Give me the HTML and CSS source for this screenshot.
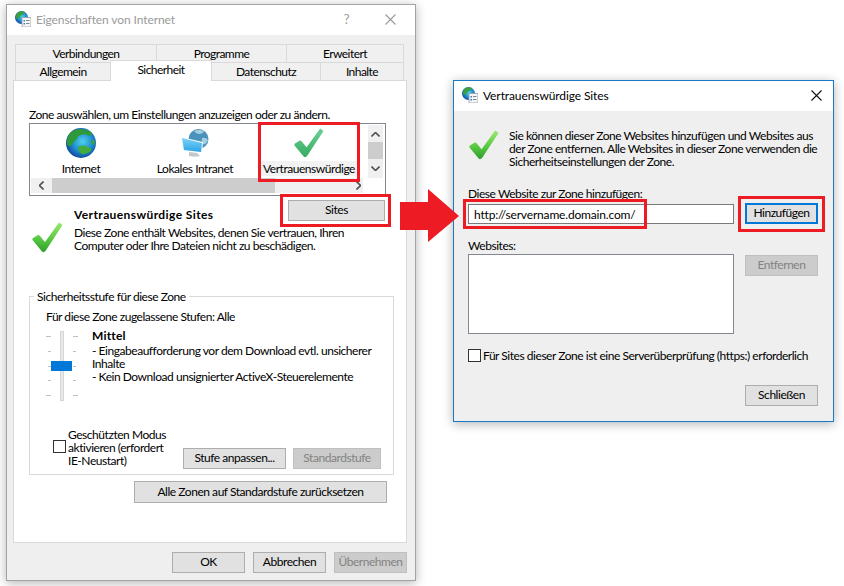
FILE: index.html
```html
<!DOCTYPE html>
<html lang="de">

<head>
    <meta charset="UTF-8">
    <meta name="viewport" content="width=device-width, initial-scale=1.0">
    <title>Vertrauenswürdige Sites</title>
    <link rel="stylesheet" href="styles.css">
</head>

<body>
    <svg class="icon-defs" aria-hidden="true">
        <defs>
            <linearGradient id="check-lime" x1="0" y1="0" x2="0" y2="1">
                <stop offset="0" stop-color="#9be86f" />
                <stop offset="0.55" stop-color="#58c943" />
                <stop offset="1" stop-color="#2f9e2c" />
            </linearGradient>
            <linearGradient id="check-teal" x1="0" y1="0" x2="0" y2="1">
                <stop offset="0" stop-color="#6fcf97" />
                <stop offset="1" stop-color="#35ac62" />
            </linearGradient>
            <radialGradient id="globe-sea" cx="0.55" cy="0.45" r="0.6">
                <stop offset="0" stop-color="#4fd0ea" />
                <stop offset="0.55" stop-color="#1f8fd0" />
                <stop offset="1" stop-color="#0f3f97" />
            </radialGradient>
            <linearGradient id="screen-blue" x1="0" y1="0" x2="0" y2="1">
                <stop offset="0" stop-color="#7fd3f7" />
                <stop offset="1" stop-color="#2aa3e6" />
            </linearGradient>
            <symbol id="check" viewBox="0 0 31 31">
                <path d="M27 0.500 L30.500 3 L13.500 29 Q11.500 31 10 29.500 L0.500 18 Q0 17 1 16 L6 13 Q7 12.800 8 14 L13 20 Z" />
            </symbol>
            <symbol id="globe" viewBox="0 0 30 30">
                <circle cx="15" cy="15" r="15" fill="url(#globe-sea)" />
                <path d="M5 4 Q14 -2 25 4 Q27 7 24 8 Q19 5 15 7 Q11 8 11 11 Q8 13 6 17 Q3 19 1 17 Q0 9 5 4 Z" fill="#2f9a3a" />
                <path d="M12 19 Q17 16 22 19 Q26 20 25 23 Q20 27 16 26 Q12 24 12 19 Z" fill="#43ab3c" />
                <path d="M25 12 Q28 11 29 14 Q29 17 27 17 Q25 15 25 12 Z" fill="#3b9f49" />
            </symbol>
            <symbol id="intranet" viewBox="0 0 28 28">
                <circle cx="17.500" cy="10" r="10" fill="#4b92bb" />
                <path d="M13 2 Q18 0 23 2 Q22 5 18 5 Q15 5 13 2 Z M21 9 Q25 8 27 11 Q25 16 22 15 Q20 12 21 9 Z" fill="#a4cfe0" />
                <path d="M0 8 L22 13 L21 24 L2 22 Z" fill="#f4fbff" />
                <path d="M1 9 L21 14 L20 23 L3 21 Z" fill="url(#screen-blue)" />
                <path d="M8 23 L16 24 L19 27 Q14 28.500 8 27 Z" fill="#c3c8cc" />
            </symbol>
            <symbol id="app-icon" viewBox="0 0 16 16">
                <circle cx="6.500" cy="6.500" r="6.500" fill="url(#globe-sea)" />
                <path d="M2 2 Q6 -1 10 1 Q9 4 6 4 Q5 7 2 8 Q0 6 2 2 Z" fill="#3d9f3d" />
                <path d="M7 6.500 H16 V16 H7 Z" fill="#f6f6f6" stroke="#9aa0a6" stroke-width="0.8" />
                <path d="M8.500 9 H10 V10.500 H8.500 Z M8.500 12 H10 V13.500 H8.500 Z" fill="#2c83c9" />
                <path d="M11 9.500 H14.500 M11 12.500 H14.500" stroke="#7d8790" stroke-width="1" />
            </symbol>
        </defs>
    </svg>

    <div class="window props">
        <div class="titlebar inactive">
            <svg class="app-icon"><use href="#app-icon" /></svg>
            <span class="title-text">Eigenschaften von Internet</span>
            <span class="help">?</span>
            <svg class="close" viewBox="0 0 11 11"><path d="M0.500 0.500 L10.500 10.500 M10.500 0.500 L0.500 10.500" /></svg>
        </div>
        <div class="props-body">
            <div class="tabs">
                <div class="tab-row upper">
                    <div class="tab t-verbindungen">Verbindungen</div>
                    <div class="tab t-programme">Programme</div>
                    <div class="tab t-erweitert">Erweitert</div>
                </div>
                <div class="tab-row">
                    <div class="tab t-allgemein">Allgemein</div>
                    <div class="tab t-sicherheit selected">Sicherheit</div>
                    <div class="tab t-datenschutz">Datenschutz</div>
                    <div class="tab t-inhalte">Inhalte</div>
                </div>
            </div>
            <div class="panel">
                <div class="line">Zone auswählen, um Einstellungen anzuzeigen oder zu ändern.</div>
                <div class="zone-list">
                    <div class="zones">
                        <div class="zone z-internet">
                            <svg class="zone-icon"><use href="#globe" /></svg>
                            <span>Internet</span>
                        </div>
                        <div class="zone z-intranet">
                            <svg class="zone-icon intranet"><use href="#intranet" /></svg>
                            <span>Lokales Intranet</span>
                        </div>
                        <div class="zone z-trusted">
                            <svg class="zone-icon check-teal"><use href="#check" /></svg>
                            <span class="zone-selected">Vertrauenswürdige</span>
                        </div>
                    </div>
                    <div class="vscroll">
                        <svg class="arrow" viewBox="0 0 9 5"><path d="M0.500 4.500 L4.500 0.500 L8.500 4.500" /></svg>
                        <div class="vthumb"></div>
                        <svg class="arrow arrow-down" viewBox="0 0 9 5"><path d="M0.500 0.500 L4.500 4.500 L8.500 0.500" /></svg>
                    </div>
                    <div class="hscroll">
                        <svg class="arrow-h" viewBox="0 0 5 9"><path d="M4.500 0.500 L0.500 4.500 L4.500 8.500" /></svg>
                        <div class="hthumb"></div>
                        <svg class="arrow-h" viewBox="0 0 5 9"><path d="M0.500 0.500 L4.500 4.500 L0.500 8.500" /></svg>
                    </div>
                </div>
                <div class="zone-info">
                    <svg class="check-large check-lime"><use href="#check" /></svg>
                    <div class="zone-name">Vertrauenswürdige Sites</div>
                    <button class="btn sites-btn">Sites</button>
                    <div class="zone-desc">Diese Zone enthält Websites, denen Sie vertrauen, Ihren<br>Computer oder Ihre Dateien nicht zu beschädigen.</div>
                </div>
                <fieldset class="level">
                    <legend>Sicherheitsstufe für diese Zone</legend>
                    <div class="line">Für diese Zone zugelassene Stufen: Alle</div>
                    <div class="level-row">
                        <div class="slider">
                            <div class="ticks left">
                                <i class="long"></i><i></i><i></i><i></i><i class="long"></i>
                            </div>
                            <div class="track"></div>
                            <div class="ticks">
                                <i class="long"></i><i></i><i></i><i></i><i class="long"></i>
                            </div>
                            <div class="thumb"></div>
                        </div>
                        <div class="level-text">
                            <div class="level-name">Mittel</div>
                            <div>- Eingabeaufforderung vor dem Download evtl. unsicherer<br>Inhalte<br>- Kein Download unsignierter ActiveX-Steuerelemente</div>
                        </div>
                    </div>
                    <div class="protect-row">
                        <span class="checkbox protect-box"></span>
                        <div class="protect-text">Geschützten Modus<br>aktivieren (erfordert<br>IE-Neustart)</div>
                        <button class="btn custom-btn">Stufe anpassen...</button>
                        <button class="btn default-btn" disabled>Standardstufe</button>
                    </div>
                </fieldset>
                <button class="btn reset-btn">Alle Zonen auf Standardstufe zurücksetzen</button>
            </div>
            <div class="footer">
                <button class="btn">OK</button>
                <button class="btn">Abbrechen</button>
                <button class="btn" disabled>Übernehmen</button>
            </div>
        </div>
    </div>

    <div class="window sites">
        <div class="titlebar">
            <svg class="app-icon"><use href="#app-icon" /></svg>
            <span class="title-text">Vertrauenswürdige Sites</span>
            <svg class="close dark" viewBox="0 0 11 11"><path d="M0.500 0.500 L10.500 10.500 M10.500 0.500 L0.500 10.500" /></svg>
        </div>
        <div class="sites-body">
            <div class="intro">
                <svg class="check-large check-lime"><use href="#check" /></svg>
                <p>Sie können dieser Zone Websites hinzufügen und Websites aus<br>der Zone entfernen. Alle Websites in dieser Zone verwenden die<br>Sicherheitseinstellungen der Zone.</p>
            </div>
            <div class="line add-label">Diese Website zur Zone hinzufügen:</div>
            <div class="form-row add-row">
                <input class="url-input" type="text" value="http://servername.domain.com/">
                <button class="btn add-btn">Hinzufügen</button>
            </div>
            <div class="line sites-label">Websites:</div>
            <div class="form-row">
                <div class="sites-list"></div>
                <button class="btn" disabled>Entfernen</button>
            </div>
            <div class="https-row">
                <span class="checkbox"></span>
                <span>Für Sites dieser Zone ist eine Serverüberprüfung (https:) erforderlich</span>
            </div>
            <div class="close-row">
                <button class="btn">Schließen</button>
            </div>
        </div>
    </div>

    <svg class="red-arrow" viewBox="0 0 59 53"><polygon points="0,13 28,13 28,0 59,27 28,53 28,41 0,41" /></svg>
    <div class="mark mark-zone"></div>
    <div class="mark mark-sites"></div>
    <div class="mark mark-url"></div>
    <div class="mark mark-add"></div>
</body>

</html>
```

FILE: styles.css
```css
body {
    margin: 0;
    width: 844px;
    height: 586px;
    position: relative;
    overflow: hidden;
    background: #fff;
    color: #000;
    font-family: Lato, sans-serif;
    font-size: 12px;
    line-height: 13px;
    letter-spacing: -0.46px;
}

.icon-defs {
    position: absolute;
    width: 0;
    height: 0;
}

/* windows sit on a free canvas */
.window {
    position: absolute;
    box-sizing: border-box;
    display: flex;
    flex-direction: column;
    background: #efefef;
    box-shadow: 0 2px 10px rgba(0, 0, 0, 0.3);
}

.props {
    left: 6px;
    top: 4px;
    width: 410px;
    height: 577px;
    border: 1px solid #a3a3a3;
}

.sites {
    left: 453px;
    top: 80px;
    width: 381px;
    height: 342px;
    border: 1px solid #1b79c4;
}

.titlebar {
    box-sizing: border-box;
    height: 30px;
    flex: none;
    display: flex;
    align-items: center;
    padding: 0 11px 2px 8px;
    background: #fff;
}

.titlebar.inactive {
    color: #9a9a9a;
    padding-right: 19px;
}

.app-icon {
    width: 16px;
    height: 16px;
    flex: none;
    margin-right: 5px;
}

.title-text {
    flex: 1;
    letter-spacing: -0.1px;
}

.help {
    margin-right: 36px;
    font-size: 13px;
}

.close {
    width: 11px;
    height: 11px;
    flex: none;
    fill: none;
    stroke: #9a9a9a;
    stroke-width: 1.1;
}

.close.dark {
    stroke: #111;
}

.props-body {
    flex: 1;
    display: flex;
    flex-direction: column;
    padding: 9px 8px 0 6px;
}

.tabs {
    margin-left: 2px;
    margin-right: 1px;
}

.tab-row {
    display: flex;
    height: 18px;
}

.tab {
    box-sizing: border-box;
    border: 1px solid #d9d9d9;
    border-bottom: none;
    margin-right: -1px;
    text-align: center;
    padding-top: 2px;
    background: #f0f0f0;
    letter-spacing: -0.55px;
}

.t-verbindungen { width: 142px; }
.t-programme { width: 131px; }
.t-erweitert { width: 118px; }
.t-allgemein { width: 96px; }
.t-sicherheit { width: 102px; }
.t-datenschutz { width: 110px; }
.t-inhalte { width: 84px; }

.tab.selected {
    position: relative;
    height: 21px;
    margin-top: -2px;
    background: #fff;
    z-index: 1;
}

.panel {
    box-sizing: border-box;
    height: 463px;
    display: flex;
    flex-direction: column;
    align-items: flex-start;
    padding: 27px 0 0 15px;
    border: 1px solid #d9d9d9;
    background: #fff;
}

.line {
    white-space: nowrap;
}

.zone-list {
    box-sizing: border-box;
    width: 357px;
    height: 73px;
    margin-top: 2px;
    padding: 1px 2px 3px 1px;
    border: 1px solid #82878d;
    display: grid;
    grid-template-columns: 337px 15px;
    grid-template-rows: 53px 15px;
}

.zones {
    display: flex;
}

.zone {
    display: flex;
    flex-direction: column;
    align-items: center;
    padding-top: 3px;
}

.z-internet { width: 100px; }
.z-intranet { width: 128px; }
.z-trusted { width: 100px; }

.zone-icon {
    width: 30px;
    height: 30px;
    margin-bottom: 4px;
}

.zone-icon.intranet {
    width: 28px;
    height: 28px;
    margin: 1px 0 5px;
}

.zone-selected {
    padding: 1px 3px;
    margin-top: -1px;
    background: #f2f2f2;
}

.check-teal { fill: url(#check-teal); }
.check-lime { fill: url(#check-lime); }

.vscroll {
    display: flex;
    flex-direction: column;
    align-items: center;
    background: #f0f0f0;
}

.vthumb {
    width: 15px;
    height: 17px;
    background: #cdcdcd;
    margin-top: 5px;
}

.arrow {
    width: 9px;
    height: 5px;
    margin-top: 7px;
    fill: none;
    stroke: #505050;
    stroke-width: 1.6;
}

.hscroll {
    width: 332px;
    display: flex;
    align-items: center;
    background: #f0f0f0;
}

.hthumb {
    width: 223px;
    height: 15px;
    margin: 0 81px 0 8px;
    background: #cdcdcd;
}

.arrow-h {
    width: 5px;
    height: 9px;
    margin-left: 8px;
    fill: none;
    stroke: #505050;
    stroke-width: 1.6;
}

.hthumb + .arrow-h {
    margin-left: 0;
}

.btn {
    box-sizing: border-box;
    width: 73px;
    height: 21px;
    padding: 0 0 2px;
    border: 1px solid #adadad;
    background: #e1e1e1;
    color: #000;
    font: inherit;
    letter-spacing: inherit;
}

.btn:disabled {
    background: #cccccc;
    border-color: #bfbfbf;
    color: #838383;
}

.zone-info {
    display: grid;
    grid-template-columns: 45px 214px 97px;
    grid-template-rows: 21px 26px;
    row-gap: 5px;
    margin-top: 4px;
}

.check-large {
    width: 31px;
    height: 31px;
    flex: none;
}

.zone-info .check-large {
    grid-row: 1 / 3;
    grid-column: 1;
    align-self: end;
    margin: 0 0 -1px 3px;
}

.zone-name {
    align-self: end;
    font-weight: 700;
    letter-spacing: 0.4px;
    white-space: nowrap;
}

.sites-btn {
    width: 97px;
}

.zone-desc {
    grid-column: 2 / 4;
    white-space: nowrap;
}

.level {
    box-sizing: border-box;
    width: 365px;
    height: 185px;
    margin: 38px 0 0;
    padding: 7px 0 0 16px;
    min-width: 0;
    border: 1px solid #d9d9d9;
}

.level legend {
    margin-left: -12px;
    padding: 0 3px;
}

.level-row {
    display: flex;
    gap: 14px;
    margin-top: 6px;
}

.slider {
    position: relative;
    flex: none;
    width: 32px;
    height: 70px;
    margin-top: 2px;
    display: flex;
    justify-content: space-between;
}

.track {
    width: 4px;
    height: 70px;
    background: #e7eaea;
    border: 1px solid #d6d6d6;
    box-sizing: border-box;
}

.thumb {
    position: absolute;
    left: 5px;
    top: 30px;
    width: 21px;
    height: 10px;
    background: #0078d7;
}

.ticks {
    display: flex;
    flex-direction: column;
    justify-content: space-between;
    align-items: flex-start;
    box-sizing: border-box;
    width: 5px;
    height: 70px;
    padding: 5px 0 5px;
}

.ticks.left {
    align-items: flex-end;
}

.ticks i {
    display: block;
    width: 3px;
    height: 1px;
    background: #c0c0c0;
}

.ticks i.long {
    width: 5px;
}

.level-text {
    white-space: nowrap;
}

.level-name {
    font-weight: 700;
    letter-spacing: 0.2px;
    margin-bottom: 2px;
}

.protect-row {
    display: flex;
    align-items: flex-start;
    margin-top: 27px;
    padding-left: 7px;
}

.checkbox {
    box-sizing: border-box;
    flex: none;
    display: block;
    width: 13px;
    height: 13px;
    border: 1px solid #333;
    background: #fff;
}

.protect-box {
    margin: 12px 2px 0 0;
}

.protect-text {
    width: 115px;
    flex: none;
    white-space: nowrap;
}

.custom-btn {
    width: 103px;
    flex: none;
    margin: 20px 7px 0 0;
}

.default-btn {
    width: 88px;
    flex: none;
    margin-top: 20px;
}

.reset-btn {
    width: 253px;
    height: 22px;
    margin: 6px 0 0 105px;
}

.footer {
    display: flex;
    justify-content: flex-end;
    gap: 8px;
    padding-top: 9px;
}

.sites-body {
    flex: 1;
    padding: 18px 0 0 14px;
}

.intro {
    display: flex;
    gap: 10px;
}

.intro p {
    margin: 0;
    white-space: nowrap;
}

.intro .check-large {
    width: 30px;
    height: 30px;
    margin-left: 1px;
    margin-top: 1px;
}

.add-label {
    margin-top: 19px;
}

.form-row {
    display: grid;
    grid-template-columns: 266px 73px;
    column-gap: 11px;
    align-items: start;
    margin-top: 2px;
}

.add-row {
    margin-top: 3px;
}

.url-input {
    box-sizing: border-box;
    width: 266px;
    height: 20px;
    margin: 1px 0 0;
    padding: 0 5px;
    border: 1px solid #7a7a7a;
    background: #fff;
    color: #000;
    font: inherit;
    letter-spacing: -0.17px;
    outline: none;
}

.add-btn {
    border: 2px solid #0078d7;
}

.sites-label {
    margin-top: 15px;
}

.sites-list {
    box-sizing: border-box;
    height: 80px;
    border: 1px solid #828790;
    background: #fff;
}

.sites-list + .btn {
    margin-top: 1px;
}

.https-row {
    display: flex;
    align-items: center;
    gap: 2px;
    margin-top: 15px;
    white-space: nowrap;
}

.close-row {
    display: flex;
    justify-content: flex-end;
    width: 350px;
    margin-top: 23px;
}

/* red annotations drawn over the screenshot */
.red-arrow {
    position: absolute;
    left: 400px;
    top: 189px;
    width: 59px;
    height: 53px;
    fill: #ed1c24;
}

.mark {
    position: absolute;
    box-sizing: border-box;
    border: 3px solid #ed1c24;
}

.mark-zone { left: 258px; top: 122px; width: 102px; height: 60px; }
.mark-sites { left: 280px; top: 194px; width: 111px; height: 33px; }
.mark-url { left: 463px; top: 199px; width: 184px; height: 30px; }
.mark-add { left: 738px; top: 196px; width: 87px; height: 36px; }
```
